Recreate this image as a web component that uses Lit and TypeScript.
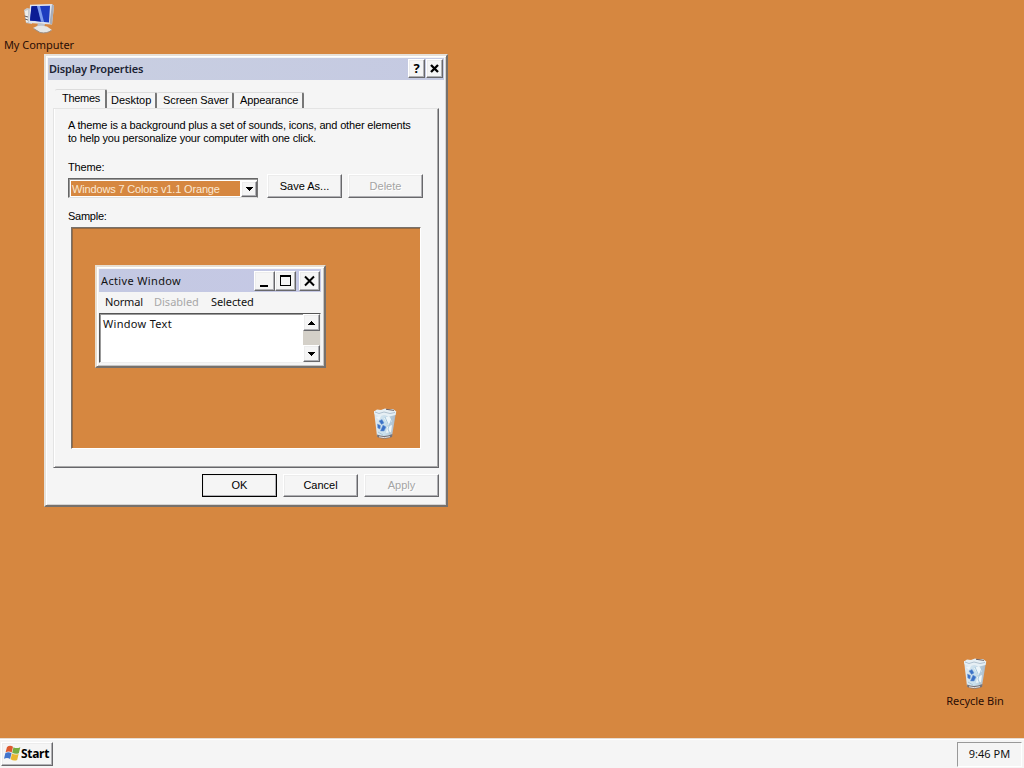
import { LitElement, html, css, svg } from "lit";
import { customElement } from "lit/decorators.js";

const binIcon = html`<svg width="26" height="34" viewBox="0 0 26 34">
  <defs>
    <linearGradient id="g" x1="0" x2="1"><stop offset="0" stop-color="#dfe9f0" /><stop offset=".5" stop-color="#c9dfec" /><stop offset="1" stop-color="#a9b9c8" /></linearGradient>
  </defs>
  <path d="M2 4L5 29Q12 33 20 29L24 5Z" fill="url(#g)" />
  <path d="M5 27.500L5.300 30Q12 33.500 20 30L20.500 27Q12 30.500 5 27.500Z" fill="#76737a" />
  <path d="M7 29.800Q12 31.500 18 29.700" stroke="#e9e4e0" stroke-width="1" fill="none" />
  <path d="M2 4.500L5 2.500L9 3L13 1.500L17 2.500L21 2L24.300 4.500L23.500 8L17 9.500L12 8L7 9.500L2.500 7Z" fill="#e6eff4" />
  <path d="M3 5L7 6.500L12 5L18 6.500L23 5.500" stroke="#a3b6c6" stroke-width=".8" fill="none" />
  <path d="M14 2.300L22 3.400" stroke="#6d6368" stroke-width="1" />
  <path d="M12 11L17 9L20 14L16 18Z M15 20L20 18L19 25L14 26Z M4 10L9 9L7 13Z" fill="#edf5f9" />
  <path d="M13 10L16 17M20 11L16 22L18 27M6 25L11 28" stroke="#a4c5da" stroke-width=".9" fill="none" />
  <path d="M7 14L10 12.500L12 16L9.500 17.500ZM5.500 17L8.500 18.500L8 22L5.800 21ZM11 18L14 20L12 24L8.500 24L9.500 21.500Z" fill="#3a70c6" stroke="#6c9bd6" stroke-width=".5" />
</svg>`;

const computerIcon = html`<svg width="32" height="30" viewBox="0 0 32 30">
  <path d="M1 6L4 4L9 5V20L3 19Z" fill="#c8cbd0" />
  <path d="M2 7L5 6V18L3 18Z" fill="#efeee9" />
  <path d="M1.500 12L5 13M2 15L5 16" stroke="#665f63" />
  <path d="M7 .800L29 0L31 2L29 20.500L6 19Z" fill="#dfe3ec" />
  <path d="M8.500 2.200L27 1.800L26 18.500L7 16.500Z" fill="#1d3cc0" />
  <path d="M8.500 2.200L14 2.100L18 17.600L7 16.500Z" fill="#0b1c94" />
  <path d="M14 2.100L17 2L21 18L18 17.600Z" fill="#7d9dee" />
  <path d="M29 0L31 2L29 20.500L26.500 19.500Z" fill="#a7adba" />
  <path d="M15 19L22 20L21 24L14 23Z" fill="#bcc3cd" />
  <path d="M10 24Q15 20.500 24 22.500L29 26Q24 30 17 28.500Z" fill="#e6e6e4" />
  <path d="M10.500 24.500L17 28.500Q24 30 28.500 26.200" stroke="#9a8f88" fill="none" />
</svg>`;

const flagIcon = html`<svg width="17" height="17" viewBox="0 0 17 17">
  <path d="M3 2Q6 -.200 9 1.800L7.700 7.500Q5 5.800 1.600 7.300Z" fill="#dd5a30" />
  <path d="M9.500 2.200Q12.500 4 16.300 2.200L14.800 8.300Q11.300 9.600 8.200 7.800Z" fill="#77ad3f" />
  <path d="M1.400 8Q4.500 6.600 7.500 8.200L6.100 14Q3.300 12.300 0 13.800Z" fill="#4375cc" />
  <path d="M8 8.500Q11 10.300 14.600 8.900L13.200 15Q9.700 16.300 6.600 14.300Z" fill="#eab72f" />
</svg>`;

const arrow = (d: string) => html`<svg width="7" height="4" viewBox="0 0 7 4" shape-rendering="crispEdges">${svg`<path d=${d} fill="#000"/>`}</svg>`;
const up = arrow("M3 0H4V1H5V2H6V3H7V4H0V3H1V2H2V1H3Z");
const down = arrow("M0 0H7V1H6V2H5V3H4V4H3V3H2V2H1V1H0Z");

const shared = css`
  :host { box-sizing: border-box; }
  * { box-sizing: border-box; }
  svg { display: block; flex: none; }
  .raised {
    display: flex; align-items: center; justify-content: center; flex: none;
    background: #f5f5f5;
    border: 1px solid; border-color: #fff #68686b #68686b #fff;
    box-shadow: inset -1px -1px #b0b0b4, inset 1px 1px #ececec;
  }
  .t { white-space: nowrap; display: block; }
`;

@customElement("preview-window")
class PreviewWindow extends LitElement {
  static styles = [shared, css`
    :host {
      display: flex; flex-direction: column; width: 231px; height: 103px;
      background: #f5f5f5; padding: 2px 3px 3px 2px;
      border: 2px solid; border-color: #e8dfd2 #77716c #77716c #e8dfd2;
      box-shadow: inset 1px 1px #fff, inset -1px -1px #c4c4c4;
      font: 11px/14px "Noto Sans", sans-serif; color: #111;
    }
    .bar { display: flex; align-items: center; height: 23px; flex: none; background: linear-gradient(90deg, #c4c9e2, #c5c8e5); padding: 1px 1px 0 2px; }
    .name { flex: 1; letter-spacing: .35px; }
    .b { width: 21px; height: 20px; }
    .close { margin-left: 3px; }
    .menu { display: flex; height: 21px; align-items: center; padding: 0 0 2px 6px; flex: none; }
    .normal { width: 49px; letter-spacing: -.15px; }
    .disabled { width: 57px; color: #a8a8a8; }
    .selected { letter-spacing: -.1px; }
    .area { display: flex; height: 50px; width: 222px; background: #fff; border: 1px solid; border-color: #555 #eee #eee #555; box-shadow: inset 1px 1px #999; }
    .text { flex: 1; padding: 3px 0 0 3px; letter-spacing: .3px; }
    .scroll { width: 17px; display: flex; flex-direction: column; justify-content: space-between; background: #d4d0c8; }
    .s { width: 17px; height: 17px; }
  `];
  render() {
    return html`
      <div class="bar"><span class="t name">Active Window</span>
        <div class="raised b"><svg width="17" height="16" shape-rendering="crispEdges"><path d="M4 12h8v2H4z" /></svg></div>
        <div class="raised b"><svg width="17" height="16" shape-rendering="crispEdges"><path d="M3 2H14V13H3Z M4 4V12H13V4Z" fill-rule="evenodd" /></svg></div>
        <div class="raised b close"><svg width="17" height="16"><path d="M4 3.500L13 12.500M13 3.500L4 12.500" stroke="#000" stroke-width="2" /></svg></div>
      </div>
      <div class="menu"><span class="t normal">Normal</span><span class="t disabled">Disabled</span><span class="t selected">Selected</span></div>
      <div class="area"><span class="t text">Window Text</span>
        <div class="scroll"><div class="raised s">${up}</div><div class="raised s">${down}</div></div>
      </div>`;
  }
}

@customElement("display-properties")
class DisplayProperties extends LitElement {
  static styles = [shared, css`
    :host {
      display: flex; flex-direction: column; width: 404px; height: 453px;
      background: #f5f5f5; padding: 2px;
      border: 2px solid; border-color: #e6e1da #77716c #77716c #e6e1da;
      box-shadow: inset 1px 1px #fff, inset -1px -1px #d4d4d4;
      font: 11px/13px "Liberation Sans", Arial, sans-serif; color: #000;
    }
    .bar { display: flex; align-items: center; height: 22px; flex: none; padding: 0 1px 1px; background: linear-gradient(90deg, #c9cfe1, #c5cae2); font: 600 11px/14px "Noto Sans", sans-serif; color: #1c2434; }
    .name { flex: 1; letter-spacing: -.19px; }
    .b { width: 17px; height: 19px; margin-left: 1px; color: #000; font: 700 13px/15px "Noto Sans", sans-serif; }
    .tabs { display: flex; height: 20px; margin: 9px 0 0 7px; align-items: flex-end; flex: none; }
    .tab { height: 17px; border-top: 1px solid #dcdcdc; border-right: 2px solid #777; display: flex; align-items: center; padding: 0 0 2px 4px; border-radius: 2px 2px 0 0; }
    .on { height: 20px; width: 52px; padding: 0 0 2px 7px; letter-spacing: -.3px; }
    .desk { width: 50px; } .saver { width: 77px; padding-left: 6px; letter-spacing: -.08px; } .app { width: 70px; padding-left: 6px; letter-spacing: -.1px; }
    .panel { margin: -1px 0 0 5px; width: 386px; height: 360px; flex: none; border: 1px solid; border-color: #e4e4e4 #66666a #66666a #e4e4e4; box-shadow: inset 1px 0 #fff, inset -1px -1px #aaa; padding: 10px 14px 0; display: flex; flex-direction: column; }
    .tl { height: 13px; }
    .l1 { letter-spacing: -.16px; } .l2 { letter-spacing: -.19px; }
    .label { margin-top: 16px; height: 13px; letter-spacing: -.15px; }
    .row { display: flex; height: 24px; width: 356px; align-items: flex-start; }
    .select { display: flex; width: 190px; height: 20px; margin-top: 4px; padding: 1px 0 1px 1px; background: #fff; border: 1px solid; border-color: #666 #777 #e0e0e0 #666; box-shadow: inset 1px 1px #999; }
    .value { flex: 1; margin: 1px 1px 0 1px; background: #d68740; color: #fbe8d2; padding: 2px 0 0 1px; line-height: 13px; letter-spacing: -.16px; }
    .drop { width: 16px; height: 16px; margin-top: 1px; }
    .btn { width: 75px; height: 24px; }
    .save { margin-left: 9px; } .del { margin-left: 6px; }
    .off { color: #a4a4a4; text-shadow: 1px 1px #fff; }
    .sample { margin-top: 12px; height: 13px; letter-spacing: -.25px; }
    .preview { position: relative; width: 350px; height: 222px; margin: 4px 0 0 3px; background: #d68740; border: 1px solid; border-color: #77716c #fff #fff #77716c; box-shadow: inset 1px 1px #996a40; }
    preview-window { position: absolute; left: 23px; top: 37px; }
    .bin { position: absolute; left: 300px; top: 179px; }
    .foot { display: flex; gap: 6px; justify-content: flex-end; margin: 6px 5px 0 0; }
    .foot .btn { height: 23px; padding-bottom: 1px; }
    .ok { outline: 1px solid #000; outline-offset: -1px; border-color: #000; }
  `];
  render() {
    return html`
      <div class="bar"><span class="t name">Display Properties</span>
        <div class="raised b">?</div>
        <div class="raised b"><svg width="11" height="11"><path d="M2 2L9 9M9 2L2 9" stroke="#000" stroke-width="2.300" /></svg></div>
      </div>
      <div class="tabs">
        <div class="tab on"><span class="t">Themes</span></div>
        <div class="tab desk"><span class="t">Desktop</span></div>
        <div class="tab saver"><span class="t">Screen Saver</span></div>
        <div class="tab app"><span class="t">Appearance</span></div>
      </div>
      <div class="panel">
        <span class="t tl l1">A theme is a background plus a set of sounds, icons, and other elements</span>
        <span class="t tl l2">to help you personalize your computer with one click.</span>
        <span class="t label">Theme:</span>
        <div class="row">
          <div class="select"><span class="t value">Windows 7 Colors v1.1 Orange</span><div class="raised drop">${down}</div></div>
          <div class="raised btn save"><span class="t">Save As...</span></div>
          <div class="raised btn del off"><span class="t">Delete</span></div>
        </div>
        <span class="t sample">Sample:</span>
        <div class="preview"><preview-window></preview-window><div class="bin">${binIcon}</div></div>
      </div>
      <div class="foot">
        <div class="raised btn ok"><span class="t">OK</span></div>
        <div class="raised btn"><span class="t">Cancel</span></div>
        <div class="raised btn off"><span class="t">Apply</span></div>
      </div>`;
  }
}

@customElement("app-root")
class AppRoot extends LitElement {
  static styles = [shared, css`
    :host { display: flex; flex-direction: column; width: 1024px; height: 768px; overflow: hidden; background: #d68740; font: 11px/14px "Noto Sans", sans-serif; color: #2a0d05; }
    .desktop { position: relative; flex: 1; }
    display-properties { position: absolute; left: 44px; top: 54px; }
    .icon { position: absolute; display: flex; flex-direction: column; align-items: center; width: 80px; }
    .computer { left: -1px; top: 4px; gap: 4px; letter-spacing: -.04px; }
    .recycle { left: 935px; top: 657px; gap: 3px; letter-spacing: -.05px; }
    .taskbar { display: flex; height: 30px; flex: none; align-items: center; justify-content: space-between; background: #f5f5f5; border-top: 1px solid #e7ddd4; box-shadow: inset 0 1px #fff; padding: 2px 2px 1px 1px; color: #111; }
    .start { width: 52px; height: 24px; justify-content: flex-start; padding: 0 0 1px 2px; font: 700 12px/14px "Noto Sans", sans-serif; letter-spacing: -.3px; color: #000; }
    .clock { width: 65px; height: 25px; display: flex; align-items: center; justify-content: center; padding-bottom: 1px; border: 1px solid; border-color: #999 #fff #fff #999; }
  `];
  render() {
    return html`
      <div class="desktop">
        <div class="icon computer">${computerIcon}<span class="t">My Computer</span></div>
        <display-properties></display-properties>
        <div class="icon recycle">${binIcon}<span class="t">Recycle Bin</span></div>
      </div>
      <div class="taskbar">
        <div class="raised start">${flagIcon}<span class="t">Start</span></div>
        <div class="clock"><span class="t">9:46 PM</span></div>
      </div>`;
  }
}
